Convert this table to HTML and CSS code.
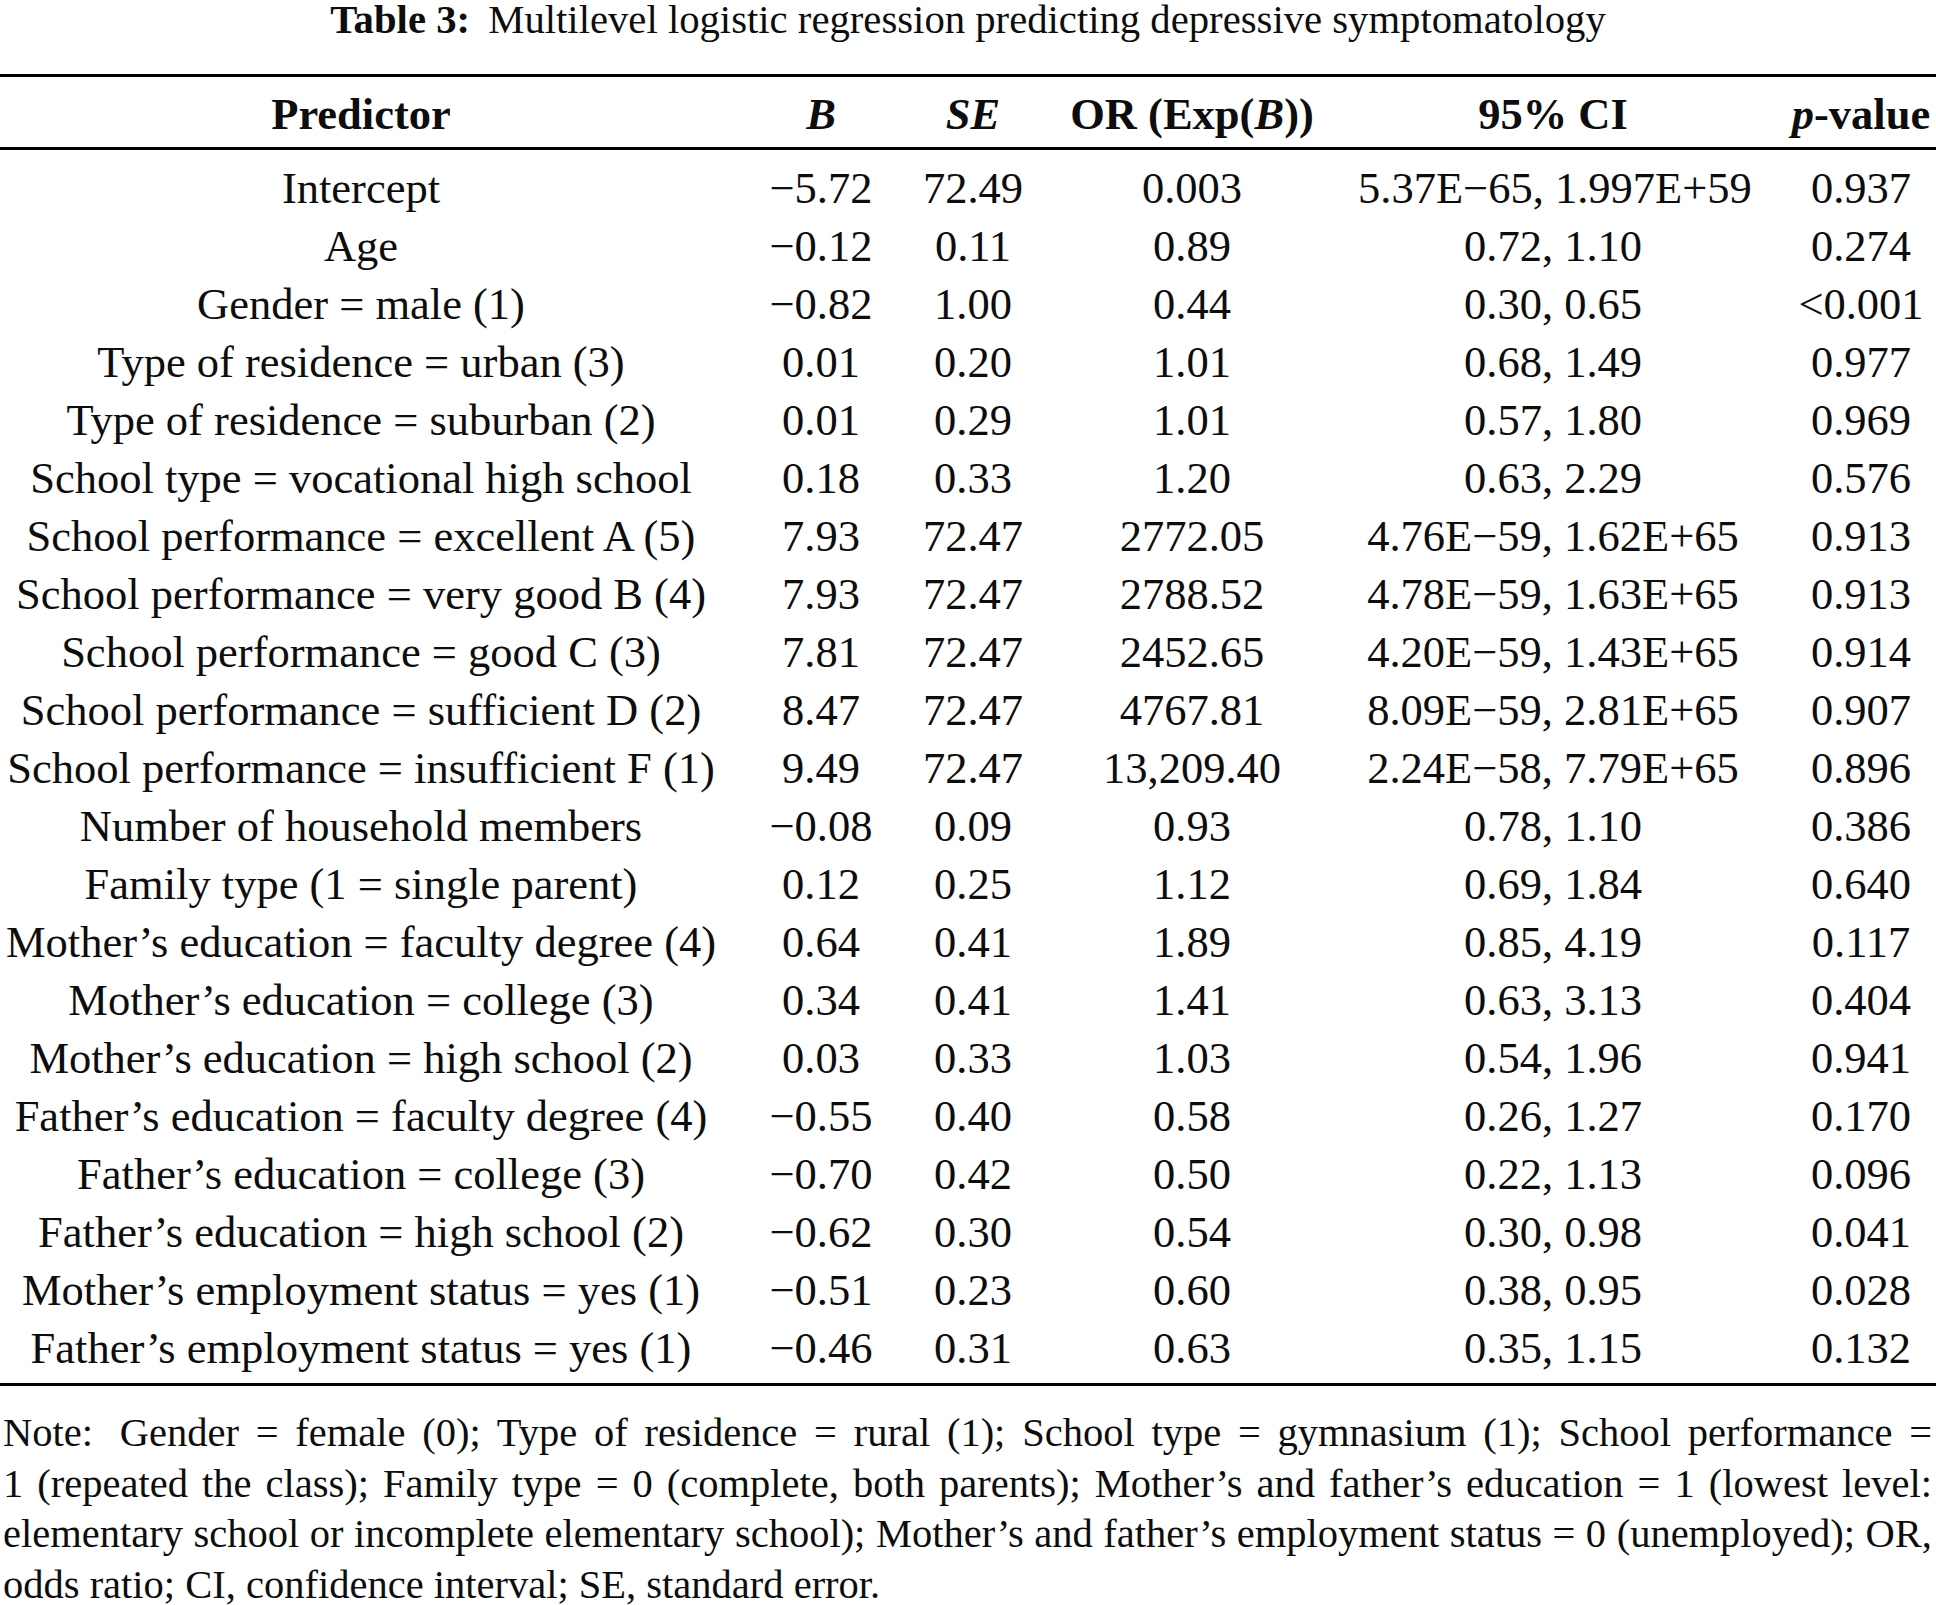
FILE: index.html
```html
<!DOCTYPE html>
<html lang="en">
<head>
<meta charset="utf-8">
<title>Table 3</title>
<link rel="stylesheet" href="styles.css">
</head>
<body>
<div class="page">
  <p class="title"><b class="label">Table 3:</b> Multilevel logistic regression predicting depressive symptomatology</p>
  <table class="data">
    <colgroup>
      <col class="c1"><col class="c2"><col class="c3"><col class="c4"><col class="c5"><col class="c6">
    </colgroup>
    <thead>
      <tr>
        <th>Predictor</th>
        <th><i>B</i></th>
        <th><i>SE</i></th>
        <th>OR (Exp(<i>B</i>))</th>
        <th>95% CI</th>
        <th class="last"><i>p</i>-value</th>
      </tr>
    </thead>
    <tbody>
      <tr class="first"><td>Intercept</td><td>−5.72</td><td>72.49</td><td>0.003</td><td>5.37E−65, 1.997E+59</td><td class="last">0.937</td></tr>
      <tr><td>Age</td><td>−0.12</td><td>0.11</td><td>0.89</td><td>0.72, 1.10</td><td class="last">0.274</td></tr>
      <tr><td>Gender = male (1)</td><td>−0.82</td><td>1.00</td><td>0.44</td><td>0.30, 0.65</td><td class="last">&lt;0.001</td></tr>
      <tr><td>Type of residence = urban (3)</td><td>0.01</td><td>0.20</td><td>1.01</td><td>0.68, 1.49</td><td class="last">0.977</td></tr>
      <tr><td>Type of residence = suburban (2)</td><td>0.01</td><td>0.29</td><td>1.01</td><td>0.57, 1.80</td><td class="last">0.969</td></tr>
      <tr><td>School type = vocational high school</td><td>0.18</td><td>0.33</td><td>1.20</td><td>0.63, 2.29</td><td class="last">0.576</td></tr>
      <tr><td>School performance = excellent A (5)</td><td>7.93</td><td>72.47</td><td>2772.05</td><td>4.76E−59, 1.62E+65</td><td class="last">0.913</td></tr>
      <tr><td>School performance = very good B (4)</td><td>7.93</td><td>72.47</td><td>2788.52</td><td>4.78E−59, 1.63E+65</td><td class="last">0.913</td></tr>
      <tr><td>School performance = good C (3)</td><td>7.81</td><td>72.47</td><td>2452.65</td><td>4.20E−59, 1.43E+65</td><td class="last">0.914</td></tr>
      <tr><td>School performance = sufficient D (2)</td><td>8.47</td><td>72.47</td><td>4767.81</td><td>8.09E−59, 2.81E+65</td><td class="last">0.907</td></tr>
      <tr><td>School performance = insufficient F (1)</td><td>9.49</td><td>72.47</td><td>13,209.40</td><td>2.24E−58, 7.79E+65</td><td class="last">0.896</td></tr>
      <tr><td>Number of household members</td><td>−0.08</td><td>0.09</td><td>0.93</td><td>0.78, 1.10</td><td class="last">0.386</td></tr>
      <tr><td>Family type (1 = single parent)</td><td>0.12</td><td>0.25</td><td>1.12</td><td>0.69, 1.84</td><td class="last">0.640</td></tr>
      <tr><td>Mother’s education = faculty degree (4)</td><td>0.64</td><td>0.41</td><td>1.89</td><td>0.85, 4.19</td><td class="last">0.117</td></tr>
      <tr><td>Mother’s education = college (3)</td><td>0.34</td><td>0.41</td><td>1.41</td><td>0.63, 3.13</td><td class="last">0.404</td></tr>
      <tr><td>Mother’s education = high school (2)</td><td>0.03</td><td>0.33</td><td>1.03</td><td>0.54, 1.96</td><td class="last">0.941</td></tr>
      <tr><td>Father’s education = faculty degree (4)</td><td>−0.55</td><td>0.40</td><td>0.58</td><td>0.26, 1.27</td><td class="last">0.170</td></tr>
      <tr><td>Father’s education = college (3)</td><td>−0.70</td><td>0.42</td><td>0.50</td><td>0.22, 1.13</td><td class="last">0.096</td></tr>
      <tr><td>Father’s education = high school (2)</td><td>−0.62</td><td>0.30</td><td>0.54</td><td>0.30, 0.98</td><td class="last">0.041</td></tr>
      <tr><td>Mother’s employment status = yes (1)</td><td>−0.51</td><td>0.23</td><td>0.60</td><td>0.38, 0.95</td><td class="last">0.028</td></tr>
      <tr class="final"><td>Father’s employment status = yes (1)</td><td>−0.46</td><td>0.31</td><td>0.63</td><td>0.35, 1.15</td><td class="last">0.132</td></tr>
    </tbody>
  </table>
  <div class="note">
    <span class="line"><span class="lead">Note:</span> Gender = female (0); Type of residence = rural (1); School type = gymnasium (1); School performance =</span>
    <span class="line">1 (repeated the class); Family type = 0 (complete, both parents); Mother’s and father’s education = 1 (lowest level:</span>
    <span class="line">elementary school or incomplete elementary school); Mother’s and father’s employment status = 0 (unemployed); OR,</span>
    <span class="line end">odds ratio; CI, confidence interval; SE, standard error.</span>
  </div>
</div>
</body>
</html>
```

FILE: styles.css
```css
html, body {
  margin: 0;
  padding: 0;
  background: #ffffff;
}

body {
  color: #0d0d0d;
  font-family: "Liberation Serif", "Times New Roman", serif;
}

.page {
  width: 1936px;
}

.title {
  margin: 0;
  font-size: 40.7px;
  line-height: 40px;
  text-align: center;
  white-space: nowrap;
}

.title .label {
  margin-right: 8px;
}

.data {
  margin-top: 34px;
  width: 1936px;
  table-layout: fixed;
  border-collapse: collapse;
  font-size: 44.5px;
  line-height: 58px;
}

.c1 { width: 722px; }
.c2 { width: 198px; }
.c3 { width: 106px; }
.c4 { width: 332px; }
.c5 { width: 390px; }
.c6 { width: 188px; }

.data th,
.data td {
  padding: 0;
  text-align: center;
  white-space: nowrap;
  vertical-align: middle;
}

.data th {
  font-weight: bold;
  padding-top: 8px;
  padding-bottom: 4px;
}

.data thead tr {
  border-top: 3px solid #000;
  border-bottom: 3px solid #000;
}

.data tbody tr.first td {
  padding-top: 9px;
}

.data tbody tr.final td {
  padding-bottom: 6px;
}

.data tbody tr.final {
  border-bottom: 3px solid #000;
}

.data .last {
  padding-left: 38px;
}

.note {
  margin-top: 22px;
  padding-left: 3px;
  width: 1929px;
  font-size: 40.5px;
  line-height: 50.5px;
}

.note .line {
  display: block;
  white-space: nowrap;
  text-align: justify;
  text-align-last: justify;
}

.note .line.end {
  text-align: left;
  text-align-last: left;
}

.note .lead {
  margin-right: 10px;
}
```
